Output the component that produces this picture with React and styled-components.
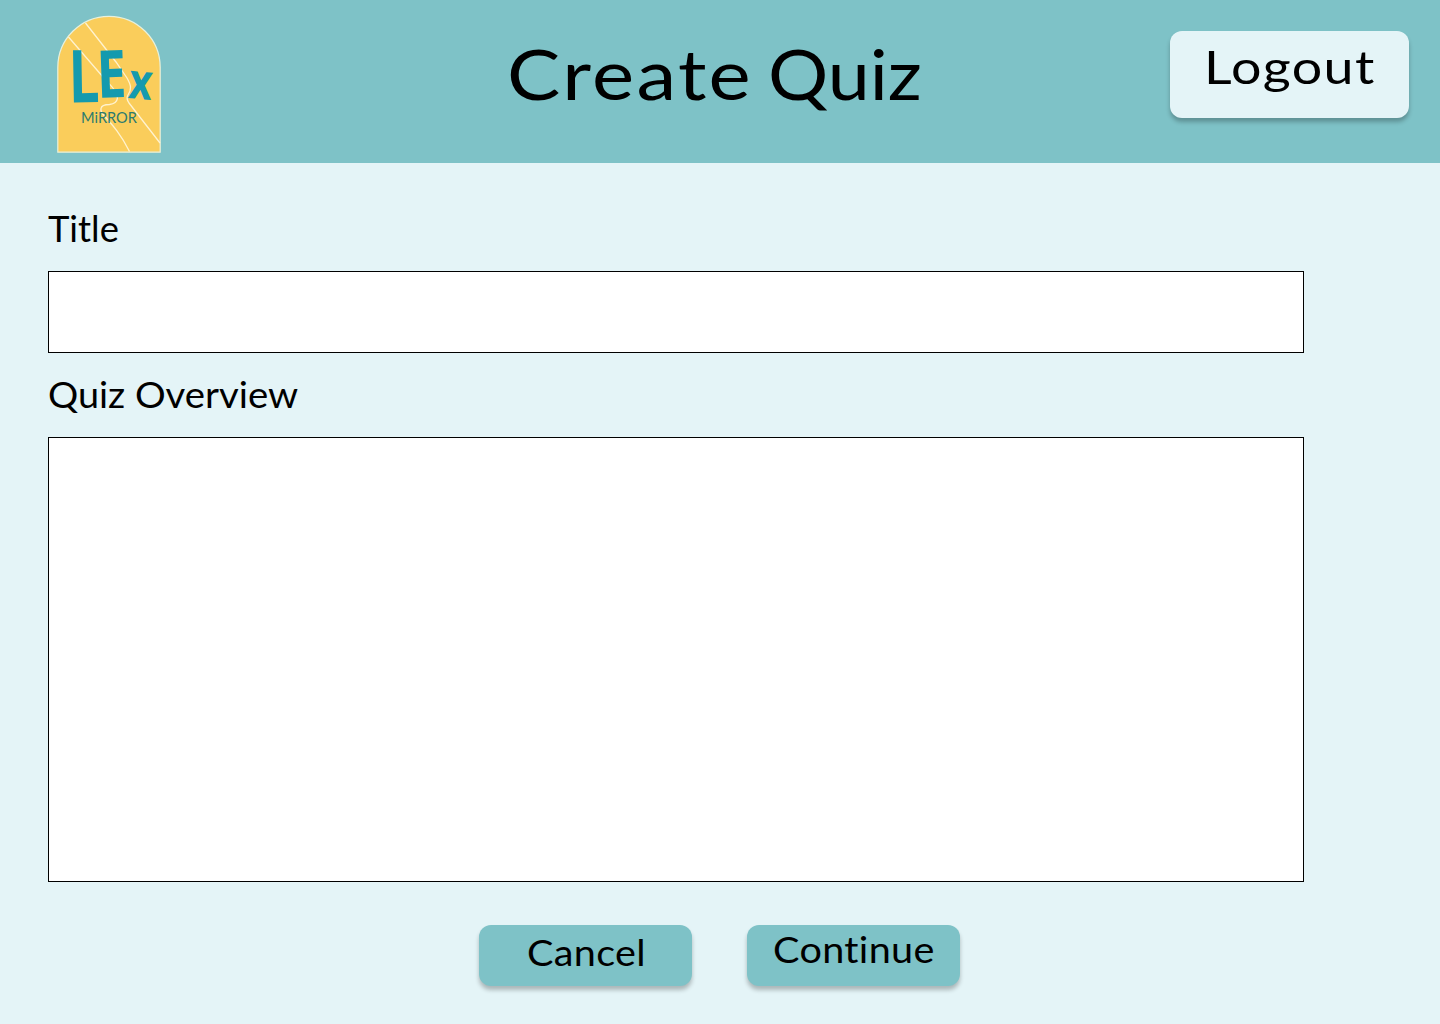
import React from "react";
import styled, { createGlobalStyle } from "styled-components";

const GlobalStyle = createGlobalStyle`
  * { box-sizing: border-box; }
  body { margin: 0; background: #e4f4f7; }
`;

const Page = styled.div`
  min-height: 1024px;
  background: #e4f4f7;
  color: #000;
  font-family: Lato, "Open Sans", sans-serif;
`;

const Header = styled.header`
  display: grid;
  grid-template-columns: 450px 1fr 239px;
  align-items: start;
  height: 163px;
  padding: 15px 31px 0 57px;
  background: #7ec2c7;
`;

const Logo = styled.svg`
  display: block;
  width: 104px;
  height: 139px;
`;

const Word = styled.span`
  display: inline-block;
  letter-spacing: ${(p) => p.$spacing || 0}px;
  margin-right: ${(p) => p.$gap || 0}px;
  transform: scaleX(${(p) => p.$stretch || 1});
  transform-origin: left center;
`;

const Heading = styled.h1`
  display: flex;
  margin: 16px 0 0;
  font-size: 70px;
  font-weight: 400;
  line-height: 84px;
  white-space: nowrap;
`;

const Button = styled.button`
  display: flex;
  justify-content: flex-start;
  align-items: flex-start;
  border: 0;
  border-radius: 12px;
  color: #000;
  font-family: inherit;
  white-space: nowrap;
  box-shadow: 0 4px 4px rgba(0, 0, 0, 0.25);
`;

const LogoutButton = styled(Button)`
  width: 239px;
  height: 87px;
  margin-top: 16px;
  padding: 7px 0 0 34px;
  background: #e4f4f7;
  font-size: 47px;
  line-height: 56px;
`;

const ActionButton = styled(Button)`
  width: 213px;
  height: 61px;
  padding: ${(p) => p.$top}px 0 0 ${(p) => p.$left}px;
  background: #7ec2c7;
  font-size: 36px;
  line-height: 42px;
`;

const Form = styled.form`
  display: flex;
  flex-direction: column;
  padding: 40px 136px 0 48px;
`;

const Label = styled.label`
  display: flex;
  height: 68px;
  font-size: 36px;
  line-height: 50px;
  white-space: nowrap;
`;

const Input = styled.input`
  height: 82px;
  margin-bottom: 16px;
  padding: 0 16px;
  border: 1px solid #000;
  border-radius: 0;
  background: #fff;
  font: 32px Lato, sans-serif;
`;

const TextArea = styled.textarea`
  height: 445px;
  padding: 16px;
  border: 1px solid #000;
  border-radius: 0;
  background: #fff;
  font: 32px Lato, sans-serif;
  resize: none;
`;

const Actions = styled.div`
  display: flex;
  gap: 55px;
  padding: 43px 0 0 431px;
`;

const BrushLetter = styled.text`
  font-family: "Open Sans", sans-serif;
  font-weight: 700;
  fill: #149aae;
`;

const Mirror = styled.text`
  font-family: Lato, sans-serif;
  font-size: 15px;
  fill: #2c7b6e;
`;

function LexMirrorLogo() {
  return (
    <Logo viewBox="0 0 104 139" role="img" aria-label="LEx Mirror">
      <path
        d="M.8 137.2V52.5a51.2 51.2 0 0 1 102.4 0v84.7z"
        fill="#facd5b"
        stroke="#e8f1dc"
        strokeWidth="1.2"
      />
      <g fill="none" stroke="#fff3cf" strokeWidth="1.3">
        <path d="M11.500 22 46 62c8 9 14 14 14.500 21-.5 4-3 6-8 6.500-5 0-8 1-8.500 4-.5 3 1 5 3 7 9 10 17 19 25.500 36" />
        <path d="M28.500 8 59 47l11 16c4 7 5 11 1 17-2 3-1 5 1 8l31 40" />
      </g>
      <BrushLetter transform="translate(12 87.500) rotate(-1) scale(.75 1)" fontSize="73">L</BrushLetter>
      <BrushLetter transform="translate(40.500 83) rotate(-2) scale(.8 1)" fontSize="66">E</BrushLetter>
      <BrushLetter transform="translate(70.500 83) rotate(5) scale(.82 1)" fontSize="50">x</BrushLetter>
      <Mirror x="24" y="107.500" textLength="56" lengthAdjust="spacingAndGlyphs">MiRROR</Mirror>
    </Logo>
  );
}

export default function App() {
  return (
    <Page>
      <GlobalStyle />
      <Header>
        <LexMirrorLogo />
        <Heading>
          <Word $spacing={2} $stretch={1.14} $gap={45}>Create</Word>
          <Word $stretch={1.075}>Quiz</Word>
        </Heading>
        <LogoutButton type="button">
          <Word $spacing={1.2} $stretch={1.145}>Logout</Word>
        </LogoutButton>
      </Header>
      <Form>
        <Label htmlFor="title">
          <Word $stretch={1.01}>Title</Word>
        </Label>
        <Input id="title" />
        <Label htmlFor="overview">
          <Word $stretch={1.05} $gap={13}>Quiz</Word>
          <Word $stretch={1.065}>Overview</Word>
        </Label>
        <TextArea id="overview" />
        <Actions>
          <ActionButton type="button" $top={6} $left={48}>
            <Word $spacing={0.3} $stretch={1.1}>Cancel</Word>
          </ActionButton>
          <ActionButton type="button" $top={3} $left={26}>
            <Word $spacing={0.3} $stretch={1.1}>Continue</Word>
          </ActionButton>
        </Actions>
      </Form>
    </Page>
  );
}
